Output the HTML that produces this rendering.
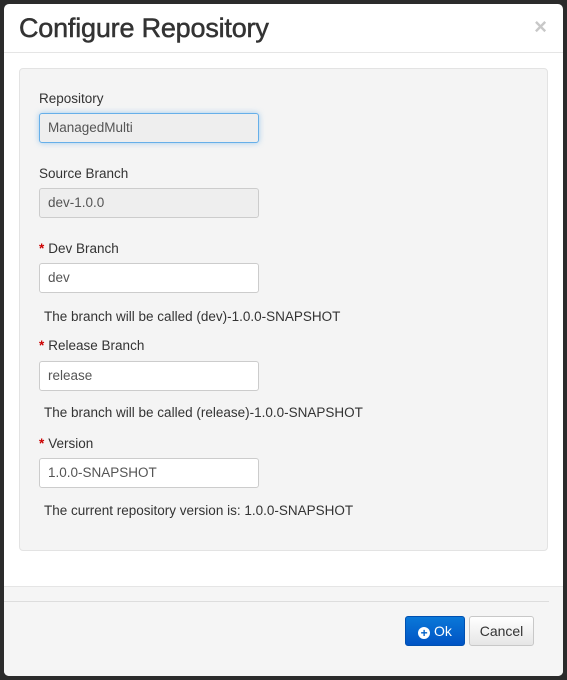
<!DOCTYPE html>
<html><head><style>
body{margin:0;width:567px;height:680px;background:#2b2b2b;font-family:"Liberation Sans",sans-serif;position:relative;overflow:hidden}
.dlg{position:absolute;left:4px;top:4px;width:559px;height:672px;background:#fff;border-radius:5px;overflow:hidden}
.hdr{height:48px;border-bottom:1px solid #e5e5e5;position:relative}
.hdr h3{margin:0;position:absolute;left:15px;top:9px;font-size:27px;font-weight:normal;color:#333;-webkit-text-stroke:0.5px #333;letter-spacing:-0.2px}
.close{position:absolute;right:16px;top:10px;font-size:22px;color:#c8c8c8;font-weight:bold}
.well{position:absolute;left:15px;top:64px;width:527px;height:481px;background:#f4f4f4;border:1px solid #e3e3e3;border-radius:4px}
.lbl{position:absolute;left:19px;font-size:13.5px;color:#333}
.lbl b{color:#c00;font-weight:bold;margin-right:4px}
.inp{position:absolute;left:19px;width:220px;height:30px;border:1px solid #ccc;border-radius:3px;background:#fff;font-size:13.5px;color:#555;line-height:28px;padding-left:8px;box-sizing:border-box}
.dis{background:#eee}
.help{position:absolute;left:24px;font-size:13.5px;color:#333}
.ftr{position:absolute;left:0;top:582px;width:559px;height:90px;background:#f5f5f5;border-top:1px solid #e5e5e5}
.ftr .ln{position:absolute;left:0;top:14px;width:545px;border-top:1px solid #ddd}
.btn{position:absolute;top:29px;height:28px;border-radius:3px;font-size:14px;line-height:28px;text-align:center}
</style></head><body>
<div class="dlg">
<div class="hdr"><h3>Configure Repository</h3><span class="close">×</span></div>
<div class="well">
<div class="lbl" style="top:22px">Repository</div>
<div class="inp dis" style="top:44px;border-color:#66afe9;box-shadow:0 0 6px rgba(102,175,233,.6)">ManagedMulti</div>
<div class="lbl" style="top:97px">Source Branch</div>
<div class="inp dis" style="top:119px">dev-1.0.0</div>
<div class="lbl" style="top:172px"><b>*</b>Dev Branch</div>
<div class="inp" style="top:194px">dev</div>
<div class="help" style="top:240px">The branch will be called (dev)-1.0.0-SNAPSHOT</div>
<div class="lbl" style="top:269px"><b>*</b>Release Branch</div>
<div class="inp" style="top:292px">release</div>
<div class="help" style="top:336px">The branch will be called (release)-1.0.0-SNAPSHOT</div>
<div class="lbl" style="top:367px"><b>*</b>Version</div>
<div class="inp" style="top:389px">1.0.0-SNAPSHOT</div>
<div class="help" style="top:434px">The current repository version is: 1.0.0-SNAPSHOT</div>
</div>
<div class="ftr"><div class="ln"></div>
<div class="btn" style="left:401px;width:58px;background:linear-gradient(#0a78d8,#0053c4);border:1px solid #0050b0;color:#fff"><span style="display:inline-block;width:12px;height:12px;border-radius:50%;background:#fff;color:#0060c8;font-size:12px;line-height:12px;font-weight:bold;vertical-align:-1px">+</span> Ok</div>
<div class="btn" style="left:465px;width:63px;background:linear-gradient(#fff,#e6e6e6);border:1px solid #c8c8c8;color:#333">Cancel</div>
</div>
</div>
</body></html>
